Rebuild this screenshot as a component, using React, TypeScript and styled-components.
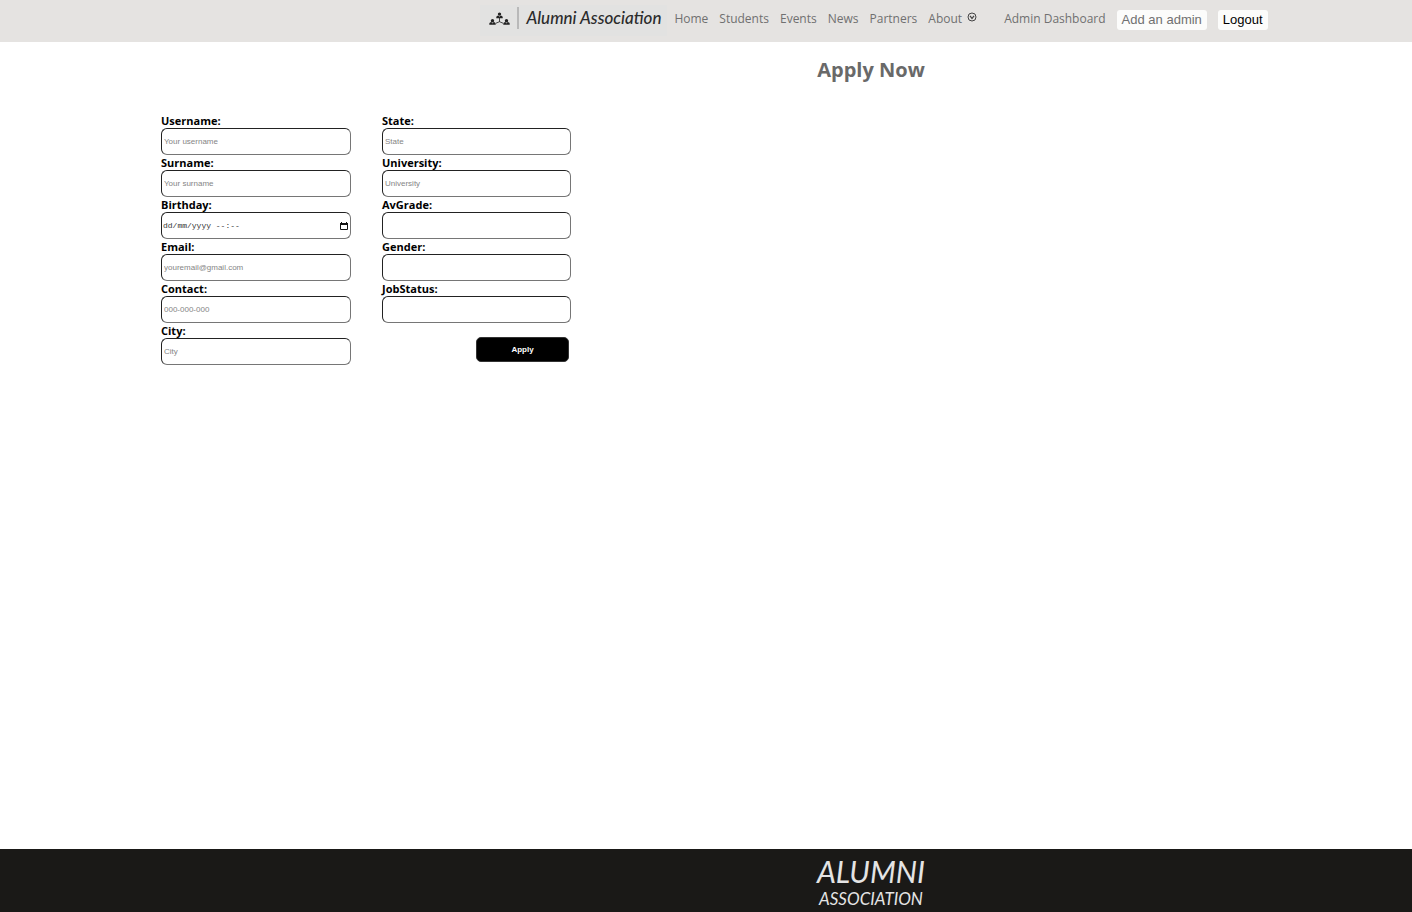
import React from "react";
import styled, { createGlobalStyle } from "styled-components";

const GlobalStyle = createGlobalStyle`
  * { box-sizing: border-box; }
  body { margin: 0; background: #fff; font-family: "Open Sans", "Noto Sans", sans-serif; }
`;

const Page = styled.div`
  display: flex;
  flex-direction: column;
  min-height: 100vh;
`;

const Header = styled.header`
  display: flex;
  justify-content: center;
  height: 42px;
  padding-left: 336px;
  padding-top: 5px;
  background: #e5e3e1;
`;

const Brand = styled.a`
  display: flex;
  align-items: flex-start;
  width: 187px;
  height: 31px;
  padding: 2px 0 0 9px;
  background: #e2e2e1;
  color: #2b2b2b;
  text-decoration: none;
  white-space: nowrap;
`;

const BrandMark = styled.svg`
  margin-top: 5px;
  flex: none;
`;

const BrandName = styled.span`
  height: 22px;
  margin-left: 7px;
  padding-left: 7px;
  border-left: 2px solid #b9b9b9;
  font: italic 500 17px/22px Lato, sans-serif;
`;

const Nav = styled.nav`
  display: flex;
  align-items: flex-start;
  gap: 11px;
  padding: 5px 0 0 7px;
`;

const NavLink = styled.a`
  color: #707070;
  font-size: 12px;
  line-height: 18px;
  text-decoration: none;
  white-space: nowrap;
`;

const Menu = styled.button`
  display: flex;
  gap: 5px;
  margin-right: 16px;
  padding: 0;
  border: 0;
  background: none;
  color: #707070;
  font: 12px/18px "Open Sans", "Noto Sans", sans-serif;

  svg { margin-top: 2px; }
`;

const NavButton = styled.button<{ $strong?: boolean }>`
  height: 20px;
  padding: 0 5px;
  border: 0;
  border-radius: 3px;
  background: #fcfcfb;
  color: ${(p) => (p.$strong ? "#000" : "#707070")};
  font: 13px/20px "Liberation Sans", Arial, sans-serif;
  white-space: nowrap;
`;

const Main = styled.main`
  flex: 1;
`;

const Title = styled.h1`
  margin: 0;
  padding: 14px 0 0 330px;
  color: #696969;
  font-size: 20px;
  line-height: 28px;
  text-align: center;
`;

const Form = styled.form`
  display: grid;
  grid-template-columns: 190px 189px;
  column-gap: 31px;
  padding: 29px 0 0 161px;
`;

const Column = styled.div`
  display: flex;
  flex-direction: column;
`;

const FieldBox = styled.div`
  display: flex;
  flex-direction: column;
`;

const Label = styled.label`
  font-size: 11px;
  font-weight: 700;
  line-height: 15px;
`;

const InputFrame = styled.span`
  display: flex;
  align-items: center;
  height: 27px;
  border: 1px solid;
  border-color: #222 #767676 #767676 #222;
  border-radius: 6px;
  background: #fff;
`;

const Input = styled.input<{ $mono?: boolean }>`
  flex: 1;
  min-width: 0;
  height: 25px;
  padding: 0 ${(p) => (p.$mono ? 1 : 2)}px;
  border: 0;
  border-radius: 5px;
  background: transparent;
  font: 8px ${(p) => (p.$mono ? '"Liberation Mono", monospace' : '"Liberation Sans", Arial, sans-serif')};

  &::placeholder { color: ${(p) => (p.$mono ? "#333" : "#858585")}; opacity: 1; }
`;

const PickerButton = styled.button`
  display: flex;
  padding: 0 2px 0 0;
  border: 0;
  background: none;
`;

const Apply = styled.button`
  align-self: flex-end;
  width: 93px;
  height: 25px;
  margin: 14px 2px 0 0;
  border: 1px solid #333;
  border-radius: 5px;
  background: #000;
  color: #fff;
  font: 700 8px "Liberation Sans", Arial, sans-serif;
`;

const Footer = styled.footer`
  display: flex;
  justify-content: center;
  height: 63px;
  padding: 4px 0 0 330px;
  background: #1a1917;
`;

const FooterLogo = styled.div`
  color: #e4e4e4;
  font-family: Lato, sans-serif;
  font-style: italic;
  text-align: center;
`;

const FooterTop = styled.div`
  font-size: 30px;
  line-height: 36px;
`;

const FooterBottom = styled.div`
  font-size: 17px;
  line-height: 20px;
`;

interface FieldProps {
  name: string;
  label: string;
  placeholder?: string;
  type?: string;
}

const Field = ({ name, label, placeholder, type = "text" }: FieldProps) => (
  <FieldBox>
    <Label htmlFor={name}>{label}:</Label>
    <InputFrame>
      <Input id={name} name={name} type={type} placeholder={placeholder} $mono={name === "birthday"} />
      {name === "birthday" && (
        <PickerButton type="button" aria-label="Choose a date">
          <svg width="8" height="8" viewBox="0 0 8 8">
            <path d="M0.5 1.5h7v6h-7z" fill="none" stroke="#111" />
            <path d="M0 1h8v2H0zM1 0h1v1H1zM6 0h1v1H6z" fill="#111" />
          </svg>
        </PickerButton>
      )}
    </InputFrame>
  </FieldBox>
);

const Person = ({ x, y }: { x: number; y: number }) => (
  <g transform={`translate(${x} ${y})`}>
    <circle cx="3.5" cy="1.7" r="1.7" />
    <path d="M0.3 5.8V4.6Q0.5 3 2.4 3L3.5 4.4L4.6 3Q6.5 3 6.7 4.6V5.8Z" />
  </g>
);

const leftFields: FieldProps[] = [
  { name: "username", label: "Username", placeholder: "Your username" },
  { name: "surname", label: "Surname", placeholder: "Your surname" },
  { name: "birthday", label: "Birthday", placeholder: "dd/mm/yyyy --:--" },
  { name: "email", label: "Email", placeholder: "youremail@gmail.com", type: "email" },
  { name: "contact", label: "Contact", placeholder: "000-000-000", type: "tel" },
  { name: "city", label: "City", placeholder: "City" },
];

const rightFields: FieldProps[] = [
  { name: "state", label: "State", placeholder: "State" },
  { name: "university", label: "University", placeholder: "University" },
  { name: "avgrade", label: "AvGrade" },
  { name: "gender", label: "Gender" },
  { name: "jobstatus", label: "JobStatus" },
];

export default function App() {
  return (
    <Page>
      <GlobalStyle />
      <Header>
        <Brand href="#">
          <BrandMark width="21" height="14" viewBox="0 0 21 14" fill="#222">
            <Person x={7} y={0.4} />
            <Person x={0} y={7} />
            <Person x={14} y={7} />
            <path d="M10.5 6v4M7 11.2l3.5-1.5l3.5 1.5" fill="none" stroke="#333" strokeWidth="0.9" />
          </BrandMark>
          <BrandName>Alumni Association</BrandName>
        </Brand>
        <Nav>
          {["Home", "Students", "Events", "News", "Partners"].map((item) => (
            <NavLink key={item} href="#">{item}</NavLink>
          ))}
          <Menu type="button">
            About
            <svg width="10" height="10" viewBox="0 0 10 10" fill="none" stroke="#444">
              <circle cx="5" cy="5" r="4" />
              <path d="M3 3.8l2 2.6l2-2.6" strokeWidth="1.2" />
            </svg>
          </Menu>
          <NavLink href="#">Admin Dashboard</NavLink>
          <NavButton type="button">Add an admin</NavButton>
          <NavButton type="button" $strong>Logout</NavButton>
        </Nav>
      </Header>
      <Main>
        <Title>Apply Now</Title>
        <Form>
          <Column>
            {leftFields.map((f) => <Field key={f.name} {...f} />)}
          </Column>
          <Column>
            {rightFields.map((f) => <Field key={f.name} {...f} />)}
            <Apply type="button">Apply</Apply>
          </Column>
        </Form>
      </Main>
      <Footer>
        <FooterLogo>
          <FooterTop>ALUMNI</FooterTop>
          <FooterBottom>ASSOCIATION</FooterBottom>
        </FooterLogo>
      </Footer>
    </Page>
  );
}
